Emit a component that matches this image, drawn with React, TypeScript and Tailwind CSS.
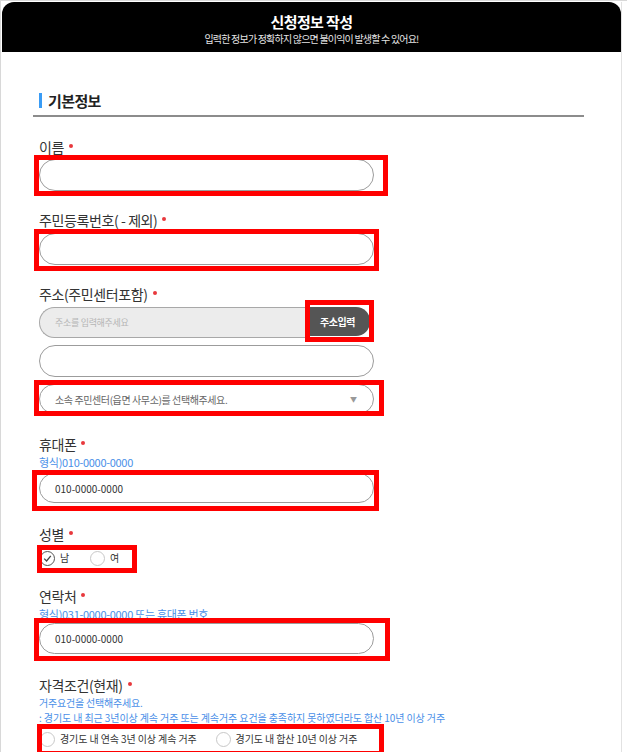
import React from "react";

const font = "font-['Noto_Sans_CJK_KR','Noto_Sans',sans-serif]";

function Label({ text, className = "" }: { text: string; className?: string }) {
  return (
    <div className={`flex items-center h-[20px] text-[14px] leading-[20px] text-[#333] tracking-[-0.4px] whitespace-pre ${className}`}>
      <span>{text}</span>
      <span className="ml-[5px] mb-[2px] w-[4px] h-[4px] rounded-full bg-[#e8383d]" />
    </div>
  );
}

function RedBox({ className }: { className: string }) {
  return <span className={`pointer-events-none absolute border-[5px] border-[#ff0000] ${className}`} />;
}

function Radio({ checked = false, label, className = "" }: { checked?: boolean; label: string; className?: string }) {
  return (
    <div className={`flex items-center ${className}`}>
      <span
        className={`w-[15px] h-[15px] rounded-full border flex items-center justify-center ${
          checked ? "border-[#555]" : "border-[#c8c8c8]"
        }`}
      >
        {checked && (
          <svg width="9" height="9" viewBox="0 0 9 9">
            <path d="M1.2 4.6 L3.6 7 L7.8 1.8" fill="none" stroke="#444" strokeWidth="1.3" />
          </svg>
        )}
      </span>
      <span className="ml-[5px] text-[10px] leading-[14px] text-[#333] tracking-[-0.1px] whitespace-pre">{label}</span>
    </div>
  );
}

export default function App() {
  return (
    <div className={`${font} w-[627px] min-h-[752px] bg-white border-t border-l border-[#d8d8d8] pt-[1px] pl-[1px]`}>
      <div className="w-[620px] min-h-[750px] border-r border-[#e2e2e2]">
        <div className="h-[50px] bg-black rounded-t-[12px] flex flex-col items-center pt-[10px] text-white">
          <div className="text-[15px] font-bold leading-[20px] tracking-[-0.6px]">신청정보 작성</div>
          <div className="text-[10px] leading-[14px] text-[#e5e5e5] tracking-[-0.8px] whitespace-pre">
            입력한 정보가 정확하지 않으면 불이익이 발생할 수 있어요!
          </div>
        </div>

        <div className="pl-[31px]">
          <div className="mt-[40px] flex items-center h-[16px] pl-[6px]">
            <span className="w-[3px] h-[15px] bg-[#3a9cf5]" />
            <span className="ml-[6px] text-[15px] font-bold text-[#222] leading-none tracking-[-0.6px]">기본정보</span>
          </div>
          <div className="mt-[7px] w-[551px] h-[2px] bg-[#8c8c8c]" />

          <div className="pl-[6px]">
            {/* 이름 */}
            <Label text="이름" className="mt-[20px]" />
            <div className="relative mt-[2px] w-[335px]">
              <div className="h-[32px] rounded-full border border-[#9c9c9c] bg-white" />
              <RedBox className="-left-[5px] -top-[4px] -right-[14px] -bottom-[5px]" />
            </div>

            {/* 주민등록번호 */}
            <Label text="주민등록번호( - 제외)" className="mt-[19px]" />
            <div className="relative mt-[3px] w-[335px]">
              <div className="h-[32px] rounded-full border border-[#9c9c9c] bg-white" />
              <RedBox className="-left-[5px] -top-[4px] -right-[5px] -bottom-[6px]" />
            </div>

            {/* 주소 */}
            <Label text="주소(주민센터포함)" className="mt-[19px]" />
            <div className="mt-[3px] w-[331px] h-[31px] flex">
              <div className="flex-1 h-full rounded-l-full border border-r-0 border-[#a8a8a8] bg-[#ececec] flex items-center pl-[15px] text-[9px] text-[#b5b5b5] tracking-[-0.3px]">
                주소를 입력해주세요
              </div>
              <div className="relative w-[65px]">
                <div className="h-[29px] rounded-r-[14px] bg-[#555] flex items-center justify-center text-white text-[10px] font-bold tracking-[-0.5px]">
                  주소입력
                </div>
                <RedBox className="left-0 -top-[7px] -right-[4px] -bottom-[4px]" />
              </div>
            </div>
            <div className="mt-[7px] w-[335px] h-[32px] rounded-full border border-[#9c9c9c] bg-white" />
            <div className="relative mt-[7px] w-[335px]">
              <div className="h-[30px] rounded-full border border-[#9c9c9c] bg-white flex items-center justify-between pl-[15px] pr-[16px]">
                <span className="text-[10px] text-[#666] tracking-[-0.4px]">소속 주민센터(읍면 사무소)를 선택해주세요.</span>
                <span className="text-[7px] text-[#999]">▼</span>
              </div>
              <RedBox className="-left-[5px] -top-[4px] -right-[10px] -bottom-[2px]" />
            </div>

            {/* 휴대폰 */}
            <Label text="휴대폰" className="mt-[20px]" />
            <div className="h-[16px] text-[11px] leading-[16px] text-[#4a8fe8] tracking-[-0.3px]">형식)010-0000-0000</div>
            <div className="relative mt-[3px] w-[335px]">
              <div className="h-[30px] rounded-full border border-[#9c9c9c] bg-white flex items-center pl-[15px] text-[10px] text-[#333]">
                010-0000-0000
              </div>
              <RedBox className="-left-[7px] -top-[3px] -right-[5px] -bottom-[8px]" />
            </div>

            {/* 성별 */}
            <Label text="성별" className="mt-[21px]" />
            <div className="relative mt-[4px] h-[20px] flex items-center pl-[1px]">
              <Radio checked label="남" />
              <Radio label="여" className="ml-[21px]" />
              <RedBox className="-left-[2px] -top-[3px] w-[100px] h-[28px]" />
            </div>

            {/* 연락처 */}
            <Label text="연락처" className="mt-[18px]" />
            <div className="h-[16px] text-[11px] leading-[16px] text-[#4a8fe8] tracking-[-0.3px]">
              형식)031-0000-0000 또는 휴대폰 번호
            </div>
            <div className="relative mt-[1px] w-[335px]">
              <div className="h-[31px] rounded-full border border-[#9c9c9c] bg-white flex items-center pl-[15px] text-[10px] text-[#333]">
                010-0000-0000
              </div>
              <RedBox className="-left-[5px] -top-[5px] -right-[16px] -bottom-[7px]" />
            </div>

            {/* 자격조건 */}
            <Label text="자격조건(현재)" className="mt-[21px]" />
            <div className="h-[15px] text-[10px] leading-[15px] text-[#4a8fe8] tracking-[-0.2px]">거주요건을 선택해주세요.</div>
            <div className="h-[15px] text-[10px] leading-[15px] text-[#4a8fe8] tracking-[-0.1px] whitespace-pre">
              : 경기도 내 최근 3년이상 계속 거주 또는 계속거주 요건을 충족하지 못하였더라도 합산 10년 이상 거주
            </div>
            <div className="relative mt-[4px] h-[20px] flex items-center pl-[1px]">
              <Radio label="경기도 내 연속 3년 이상 계속 거주" />
              <Radio label="경기도 내 합산 10년 이상 거주" className="ml-[19px]" />
              <RedBox className="-left-[2px] -top-[5px] w-[347px] h-[32px]" />
            </div>
            <div className="h-[10px]" />
          </div>
        </div>
      </div>
    </div>
  );
}
